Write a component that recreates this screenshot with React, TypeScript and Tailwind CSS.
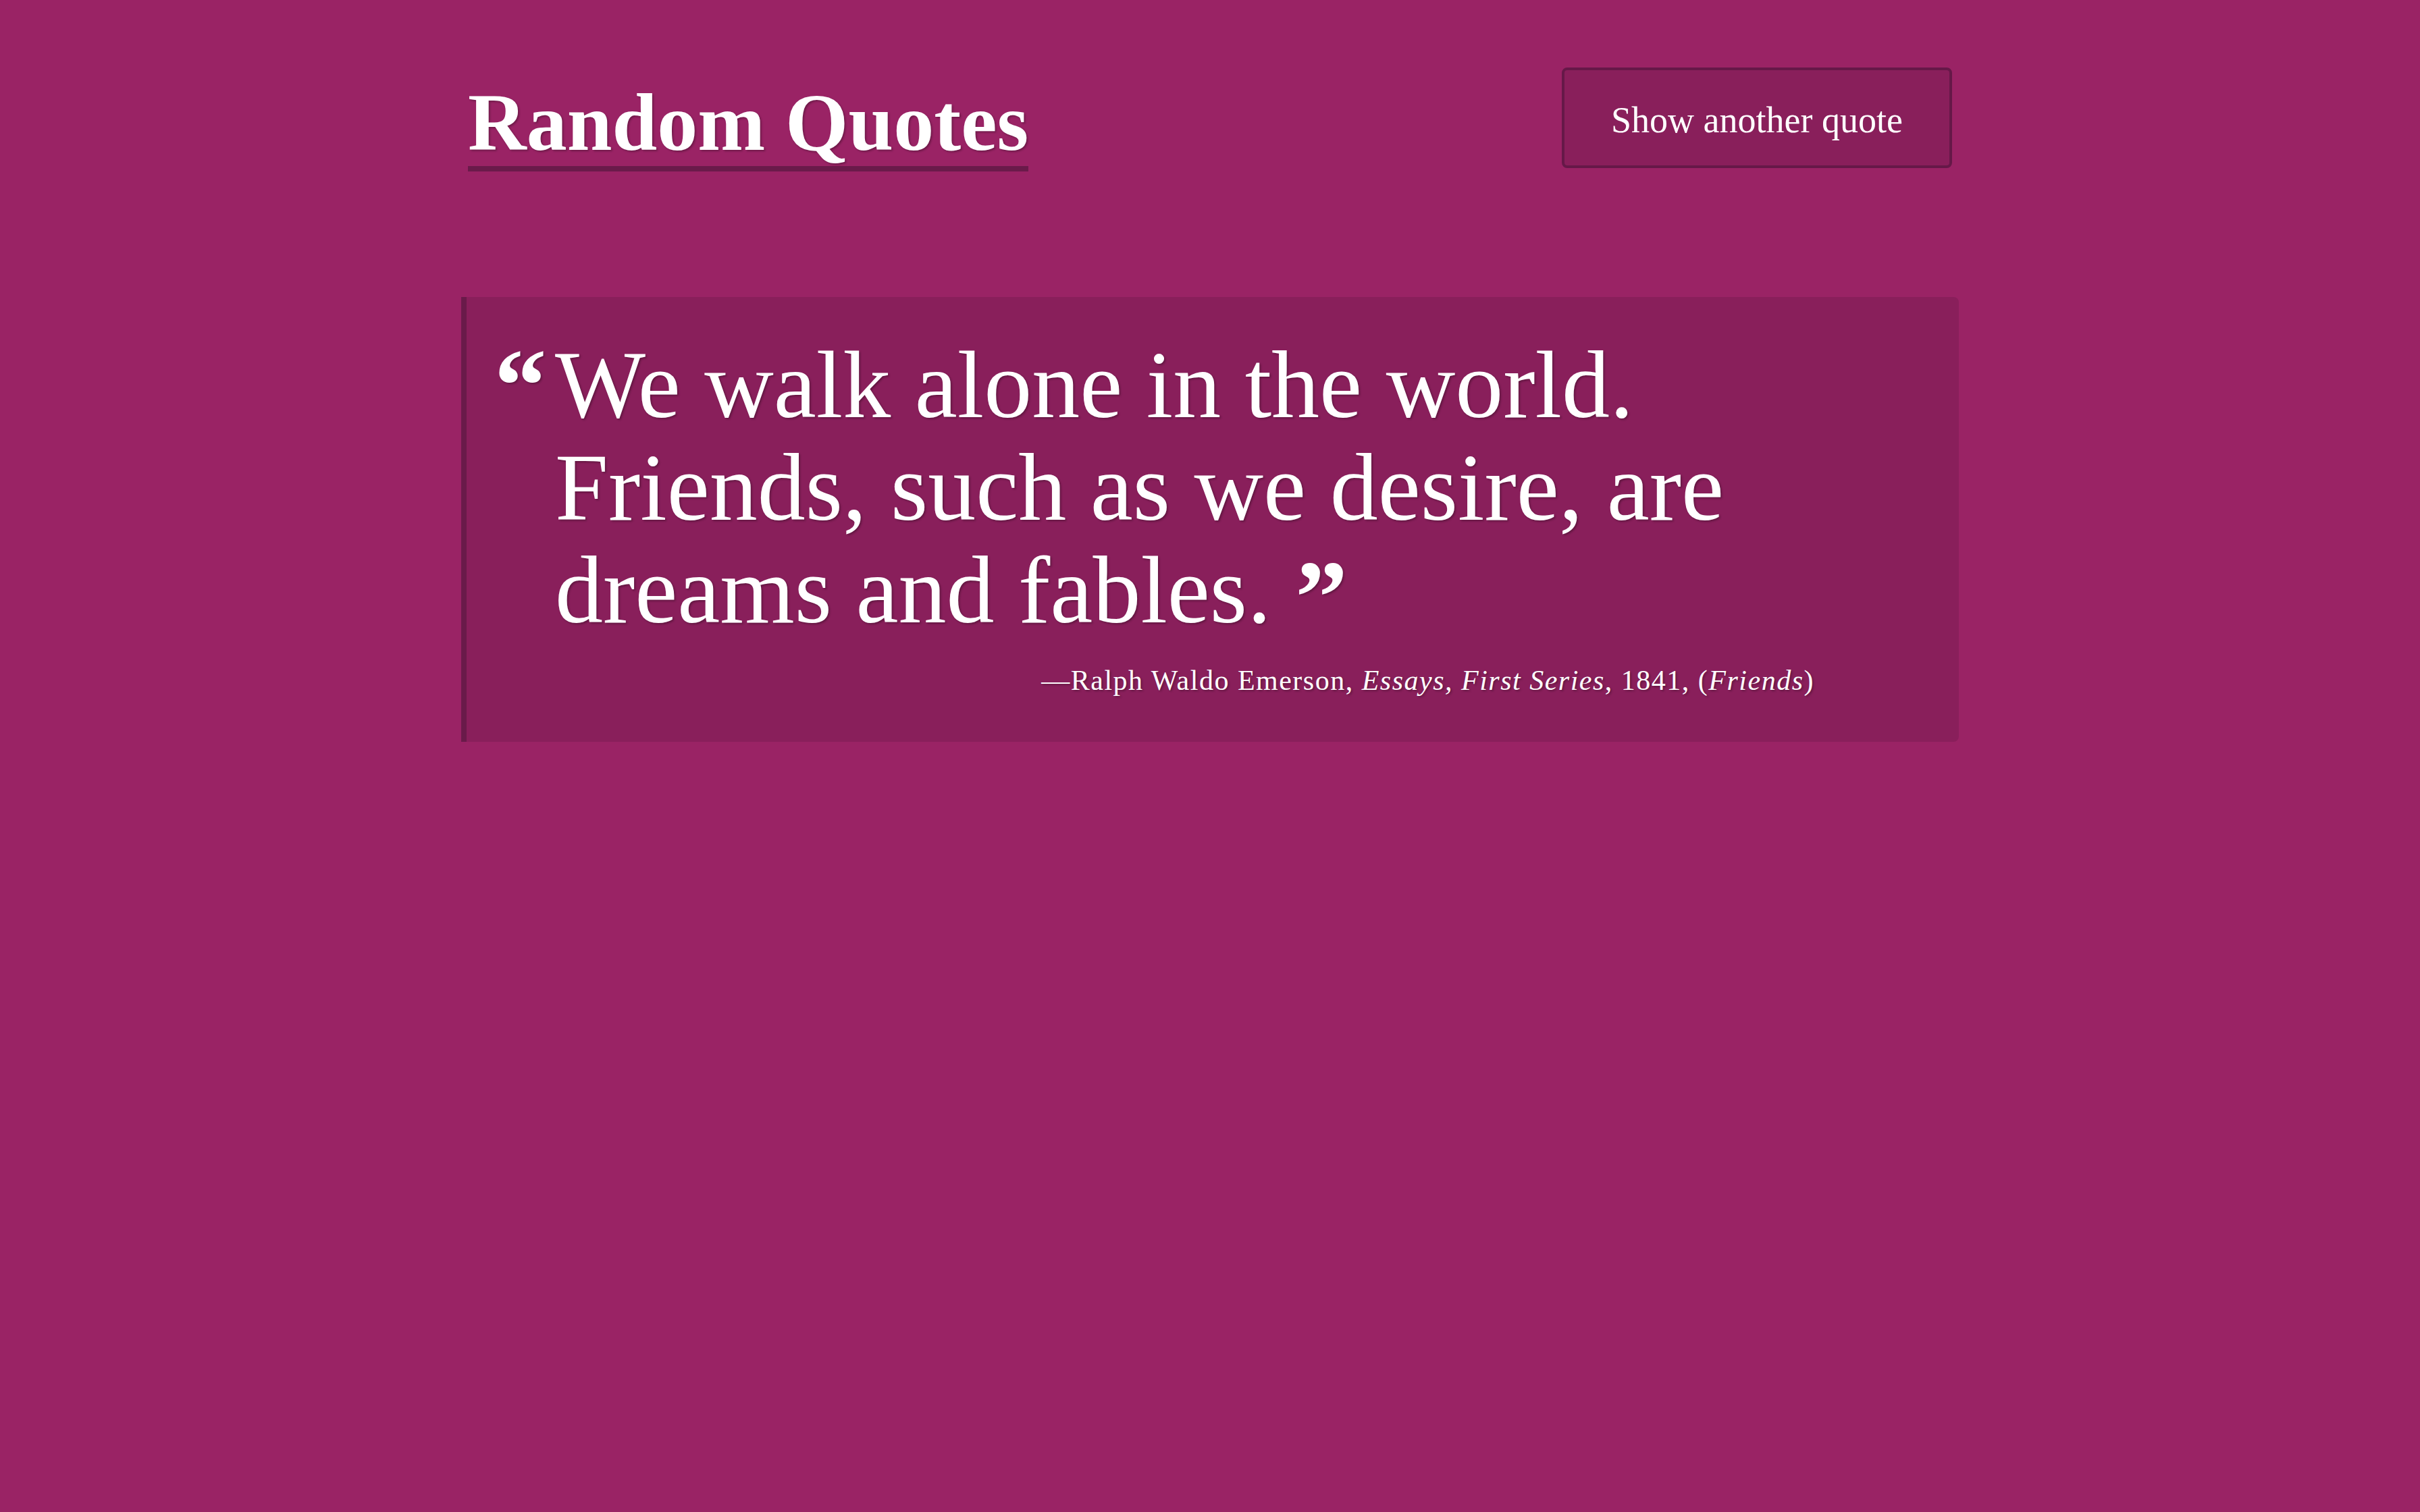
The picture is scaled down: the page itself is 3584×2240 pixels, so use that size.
import React from "react";

export default function App() {
  const serif = { fontFamily: '"Liberation Serif", "DejaVu Serif", serif' };
  return (
    <div
      className="min-h-screen w-full bg-[#9a2365] text-white [text-shadow:2px_2px_3px_rgba(0,0,0,0.28)]"
      style={serif}
    >
      <div className="mx-auto w-[2198px] pt-[100px]">
        <header className="flex items-start justify-between">
          <h1 className="mt-[17px] inline-block border-b-[8px] border-[#6a1a4a] text-[120px] font-bold leading-[129px]">
            Random Quotes
          </h1>
          <button className="rounded-[8px] border-[4px] border-[#661848] bg-[#891f5b] px-[69px] pt-[34px] pb-[26px] text-[54px] leading-[81px] text-white">
            Show another quote
          </button>
        </header>

        <section className="mx-[-10px] mt-[186px] rounded-r-[8px] border-l-[8px] border-[#6a1a4a] bg-[#891f5b] pt-[54px] pr-[214px] pb-[59px] pl-[131px]">
          <blockquote className="relative">
            <span className="absolute left-[-90px] top-0 text-[155px] font-bold leading-none">
              “
            </span>
            <p className="text-[142px] leading-[152px]">
              We walk alone in the world. Friends, such as we desire, are dreams
              and fables.{" "}
              <span className="mt-[10px] inline-block h-[100px] align-top text-[155px] font-bold leading-none">
                ”
              </span>
            </p>
            <footer className="mt-[27px] text-right text-[42px] leading-[63px] tracking-[1.5px]">
              —Ralph Waldo Emerson, <cite className="italic">Essays, First Series</cite>, 1841, (
              <cite className="italic">Friends</cite>)
            </footer>
          </blockquote>
        </section>
      </div>
    </div>
  );
}
